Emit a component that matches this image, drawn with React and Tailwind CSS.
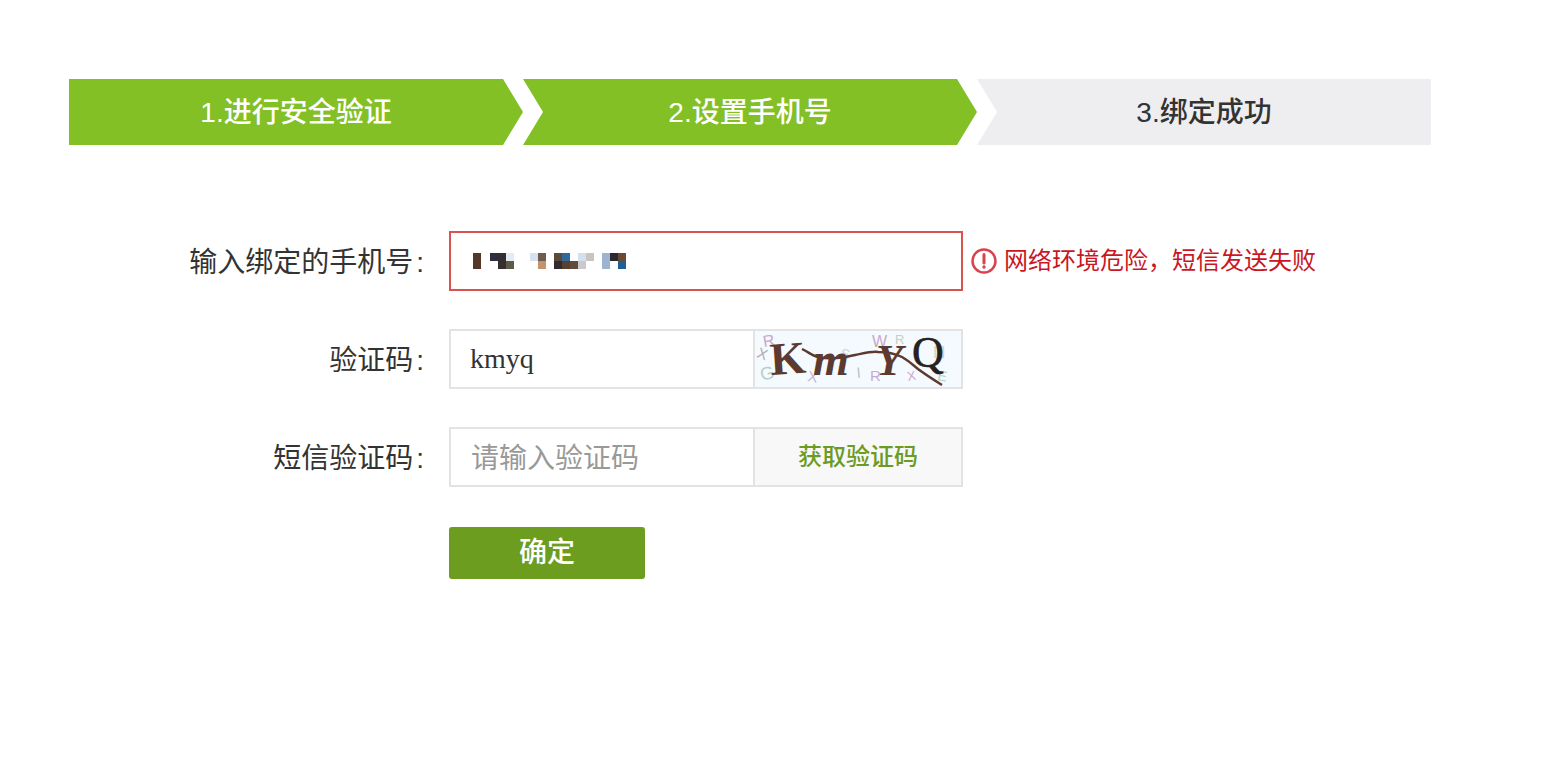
import React from 'react';

const FONT = "font-['Liberation_Sans','Noto_Sans_CJK_SC',sans-serif]";

const mosaic = [
  [473, 0, '#54392b'], [473, 1, '#54392b'],
  [490, 0, '#2f2f3f'], [498, 0, '#332f33'], [498, 1, '#352f30'], [506, 0, '#e3ebf3'], [506, 1, '#5f5a48'],
  [530, 0, '#d8e2ef'], [538, 0, '#6f5c4e'], [538, 1, '#c3936b'],
  [554, 0, '#5c4a38'], [554, 1, '#2f2b2e'], [562, 0, '#2f6a9e'], [562, 1, '#5a4030'], [570, 1, '#614c3c'],
  [578, 0, '#d3e0ee'], [578, 1, '#cdc8cc'], [586, 0, '#c9c4c0'],
  [602, 0, '#9db4d0'], [602, 1, '#9db4d0'], [610, 0, '#2a2a30'], [618, 0, '#6b4a35'], [618, 1, '#1f5f95'],
];

function Step({ children, shape, tone }) {
  return (
    <div className={`flex h-[66px] w-[454px] items-center justify-center pt-[2px] text-[28px] font-medium ${shape} ${tone}`}>
      {children}
    </div>
  );
}

function Label({ children }) {
  return (
    <div className="w-[356px] pt-1 pr-[1px] text-right text-[28px] leading-[60px] text-[#333]">
      {children}
      <span className="ml-[3px]">:</span>
    </div>
  );
}

function Captcha() {
  const noise = [
    ['R', 9, 16, '#c9a9c9', -10, 16], ['X', 1, 26, '#b9a9b9', 20, 15], ['G', 7, 50, '#b5cfc5', -15, 18],
    ['S', 85, 27, '#c5d5d5', 10, 14], ['X', 52, 50, '#c9b5d9', 10, 15], ['I', 102, 47, '#b5c9c9', -5, 15],
    ['R', 115, 50, '#c9a9d9', 0, 15], ['W', 117, 16, '#c9a9c9', 0, 16], ['R', 140, 13, '#c5d0c5', 0, 13],
    ['X', 153, 50, '#d0a9c9', -10, 13], ['E', 182, 49, '#b5d0c5', 10, 14], ['N', 178, 27, '#c5d9d0', 0, 17],
  ];
  return (
    <svg width="206" height="56" viewBox="0 0 206 56" className="block bg-[#f4fafd]">
      {noise.map(([t, x, y, c, r, s], i) => (
        <text key={i} x={x} y={y} fill={c} fontSize={s} fontFamily="Liberation Sans" transform={`rotate(${r} ${x} ${y})`}>{t}</text>
      ))}
      <g fontFamily="Liberation Serif" fontWeight="700" fill="#5d3a30">
        <text x="16" y="44" fontSize="46" transform="rotate(-4 16 44)">K</text>
        <text x="58" y="44" fontSize="46" fontStyle="italic">m</text>
        <text x="121" y="44" fontSize="44" fontStyle="italic">Y</text>
      </g>
      <text x="157" y="36" fontSize="44" fontFamily="Liberation Serif" fill="#222" stroke="#222" strokeWidth="0.6">Q</text>
      <path d="M47 18 C55 22 58 25 63 26 C78 29 90 26 100 24 C110 22 118 20 123 21 C132 21 141 23 147 26 C154 30 158 34 163 38 C171 44 179 49 187 54" fill="none" stroke="#5d3a30" strokeWidth="2.5" />
    </svg>
  );
}

export default function App() {
  return (
    <div className={`min-h-[763px] bg-white pl-[69px] pt-[79px] ${FONT}`}>
      <div className="flex">
        <Step shape="[clip-path:polygon(0_0,434px_0,100%_50%,434px_100%,0_100%)]" tone="bg-[#82c026] text-white">
          1.进行安全验证
        </Step>
        <Step shape="[clip-path:polygon(0_0,434px_0,100%_50%,434px_100%,0_100%,20px_50%)]" tone="bg-[#82c026] text-white">
          2.设置手机号
        </Step>
        <Step shape="[clip-path:polygon(0_0,100%_0,100%_100%,0_100%,20px_50%)]" tone="bg-[#eeeef0] text-[#333]">
          3.绑定成功
        </Step>
      </div>

      <div className="mt-[86px] flex flex-col gap-[38px]">
        <div className="flex h-[60px] items-center">
          <Label>输入绑定的手机号</Label>
          <div className="ml-6 h-[60px] w-[514px] border-2 border-[#d9534f] bg-white">
            <svg width="510" height="56" viewBox="451 233 510 56" className="block">
              {mosaic.map(([x, row, c]) => (
                <rect key={`${x}-${row}`} x={x} y={253 + row * 8} width="8" height="8" fill={c} />
              ))}
            </svg>
          </div>
          <svg width="26" height="26" viewBox="0 0 26 26" className="ml-2 shrink-0">
            <circle cx="13" cy="13" r="11.5" fill="none" stroke="#d9434e" strokeWidth="2.5" />
            <path d="M13 6.5v8.5" stroke="#d9434e" strokeWidth="3" strokeLinecap="round" />
            <circle cx="13" cy="19" r="1.7" fill="#d9434e" />
          </svg>
          <span className="ml-[7px] text-2xl text-[#c9161f]">网络环境危险，短信发送失败</span>
        </div>

        <div className="flex h-[60px] items-center">
          <Label>验证码</Label>
          <div className="ml-6 flex h-[60px] w-[514px] border-2 border-[#e2e3e5] bg-white">
            <div className="w-[304px] border-r-2 border-[#e2e3e5] pl-[19px] font-['Liberation_Serif',serif] text-[28px] leading-[56px] text-[#333]">
              kmyq
            </div>
            <Captcha />
          </div>
        </div>

        <div className="flex h-[60px] items-center">
          <Label>短信验证码</Label>
          <div className="ml-6 flex h-[60px] w-[514px] border-2 border-[#e2e3e5] bg-white">
            <div className="w-[304px] border-r-2 border-[#e2e3e5] pt-[2px] pl-5 text-[28px] leading-[56px] text-[#999]">
              请输入验证码
            </div>
            <div className="flex flex-1 items-center justify-center bg-[#f8f8f8] text-2xl font-medium text-[#6c9b23]">
              获取验证码
            </div>
          </div>
        </div>
      </div>

      <div className="mt-10 ml-[380px] flex h-[52px] w-[196px] items-center justify-center rounded-[3px] bg-[#6c9d1e] text-[28px] font-medium text-white">
        确定
      </div>
    </div>
  );
}
